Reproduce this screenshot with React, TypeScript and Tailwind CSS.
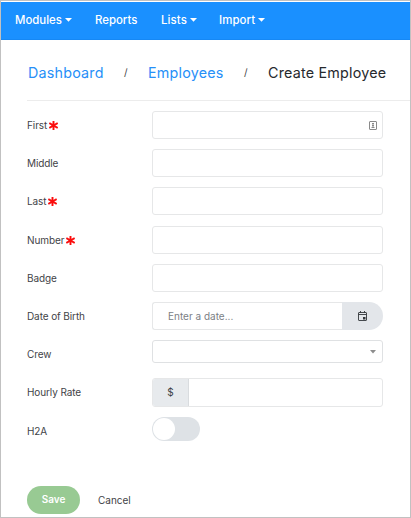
import type { ReactNode } from "react";

interface FieldProps {
  label: string;
  required?: boolean;
  children?: ReactNode;
}

function Caret() {
  return (
    <svg className="ml-[3px] mt-[-2px] h-[4px] w-[7px]" viewBox="0 0 7 4" fill="currentColor">
      <path d="M0 0h7L3.5 3.7z" />
    </svg>
  );
}

function Asterisk() {
  return (
    <svg className="ml-[2px] h-[9px] w-[9px]" viewBox="0 0 9 9" fill="none" stroke="#fb0d0d" strokeWidth="1.9">
      <path d="M4.5 0v9M0.3 2.1l8.4 4.8M8.7 2.1L0.3 6.9" />
    </svg>
  );
}

function Field({ label, required, children }: FieldProps) {
  return (
    <div className="flex h-[38.2px] items-start">
      <label className="flex h-[29px] w-[125px] shrink-0 items-center text-[10px] tracking-[-0.01em] text-[#3f4347]">
        {label}
        {required && <Asterisk />}
      </label>
      {children ?? <TextBox />}
    </div>
  );
}

function TextBox({ children }: { children?: ReactNode }) {
  return (
    <div className="flex h-[28px] w-[231px] items-center justify-end rounded-[3px] border border-[#e6e7e8] pr-[5px]">
      {children}
    </div>
  );
}

export default function App() {
  return (
    <div className="flex h-[518px] w-[411px] flex-col overflow-hidden border border-[#c1c1c1] bg-white font-['Inter',sans-serif]">
      <nav className="mt-px flex h-[38px] shrink-0 items-center border-b border-[#1688f5] bg-[#1a90ff] pl-[14px] pt-px text-[11.4px] font-medium text-white">
        <a className="flex w-[80px] items-center">Modules<Caret /></a>
        <a className="w-[66px]">Reports</a>
        <a className="flex w-[58px] items-center tracking-[0.01em]">Lists<Caret /></a>
        <a className="flex items-center tracking-[0.01em]">Import<Caret /></a>
      </nav>

      <div className="ml-[26px] flex h-[61px] shrink-0 items-center border-b border-[#ececec] pl-px pt-[5px] text-[14.3px] tracking-[0.015em] text-[#268ff8]">
        <a className="w-[96px]">Dashboard</a>
        <span className="w-[24px] text-[10px] text-[#444]">/</span>
        <a className="w-[96px]">Employees</a>
        <span className="w-[24px] text-[10px] text-[#444]">/</span>
        <span className="whitespace-nowrap text-[#26292d]">Create Employee</span>
      </div>

      <form className="ml-[26px] pt-[10px]">
        <Field label="First" required>
          <TextBox>
            <svg className="h-[9px] w-[8px]" viewBox="0 0 8 9" fill="none" stroke="#8a8a8a">
              <rect x="0.5" y="0.5" width="7" height="8" rx="0.5" />
              <path d="M3 2.5h2M3 4.5h2M2.5 6.5h3M4 2v4" />
            </svg>
          </TextBox>
        </Field>
        <Field label="Middle" />
        <Field label="Last" required />
        <Field label="Number" required />
        <Field label="Badge" />
        <Field label="Date of Birth">
          <div className="flex h-[28.5px] w-[231px]">
            <div className="flex flex-1 items-center rounded-l-[3px] border border-r-0 border-[#e6e7e8] pl-[15px] text-[10px] text-[#7b8085]">
              Enter a date...
            </div>
            <div className="flex w-[41px] items-center justify-center rounded-r-full bg-[#e3e6ea]">
              <svg className="h-[10px] w-[9px]" viewBox="0 0 9 10" fill="none" stroke="#33373b" strokeWidth="0.9">
                <rect x="0.5" y="1.5" width="8" height="8" rx="0.5" />
                <path d="M0.5 3.5h8M2.5 0v2M6.5 0v2" />
                <path d="M5 6h2.5v2.5H5z" fill="#33373b" stroke="none" />
              </svg>
            </div>
          </div>
        </Field>
        <Field label="Crew">
          <div className="flex h-[23px] w-[231px] items-center justify-end rounded-[3px] border border-[#dfe1e3] pr-[6px]">
            <svg className="h-[4px] w-[6px]" viewBox="0 0 6 4" fill="#8d8d8d">
              <path d="M0 0h6L3 3.5z" />
            </svg>
          </div>
        </Field>
        <Field label="Hourly Rate">
          <div className="flex h-[28.5px] w-[231px] overflow-hidden rounded-[3px] border border-[#e6e7e8]">
            <div className="flex w-[36px] items-center justify-center border-r border-[#d9dcdf] bg-[#e7eaed] text-[10px] text-[#3f4347]">
              $
            </div>
          </div>
        </Field>
        <Field label="H2A">
          <div className="flex h-[24px] w-[48px] items-center rounded-full bg-[#dee2e6] pl-px">
            <div className="h-[22px] w-[22px] rounded-full bg-white" />
          </div>
        </Field>
        <div className="flex items-center pt-[31px] text-[10px]">
          <button className="h-[28px] w-[53px] rounded-full bg-[#98ca93] font-semibold text-white">Save</button>
          <button className="ml-[18px] pt-px text-[#3f4347]">Cancel</button>
        </div>
      </form>
    </div>
  );
}
